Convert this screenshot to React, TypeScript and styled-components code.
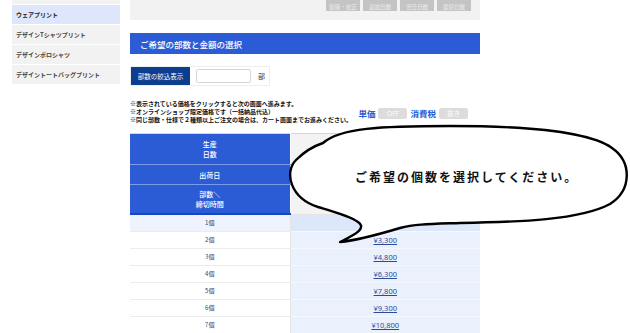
import React from 'react';
import styled, { createGlobalStyle } from 'styled-components';

const GlobalStyle = createGlobalStyle`
  html, body {
    margin: 0;
    padding: 0;
    background: #fff;
    overflow: hidden;
  }
  body {
    font-family: 'Noto Sans CJK JP', 'Noto Sans', sans-serif;
    color: #333;
  }
`;

const Page = styled.div`
  position: relative;
  width: 630px;
  height: 333px;
  overflow: hidden;
  display: grid;
  grid-template-columns: 108px 350px;
  column-gap: 10px;
  padding-left: 12px;
  box-sizing: border-box;
`;

const SideMenu = styled.ul`
  list-style: none;
  margin: 0;
  padding: 0;
  display: flex;
  flex-direction: column;
  gap: 1px;
`;

const SideItem = styled.li<{ $active?: boolean; $h?: number }>`
  height: ${(p) => p.$h ?? 19}px;
  display: flex;
  align-items: center;
  padding-left: 4px;
  font-size: 6px;
  font-weight: 700;
  color: ${(p) => (p.$active ? '#222' : '#444')};
  background: ${(p) => (p.$active ? '#dde6fb' : '#f2f2f2')};
`;

const Main = styled.div`
  display: flex;
  flex-direction: column;
`;

const TopPanel = styled.div`
  height: 20px;
  background: #f2f2f2;
  display: flex;
  justify-content: flex-end;
  align-items: flex-start;
  gap: 3px;
  padding-right: 9px;
`;

const GrayButton = styled.span`
  width: 34px;
  height: 11px;
  background: #c4c4c4;
  color: #eee;
  font-size: 5.5px;
  display: flex;
  align-items: flex-end;
  justify-content: center;
  padding-bottom: 1px;
  box-sizing: border-box;
  line-height: 1;
`;

const SectionBar = styled.h2`
  margin: 13px 0 0;
  height: 21px;
  background: #2b5cd5;
  color: #fff;
  font-size: 8.5px;
  font-weight: 500;
  display: flex;
  align-items: center;
  padding-left: 10px;
`;

const FilterRow = styled.div`
  margin-top: 12px;
  height: 20px;
  width: 140px;
  display: flex;
  align-items: center;
  border: 1px solid #efefef;
  box-sizing: border-box;
`;

const FilterLabel = styled.span`
  background: #0c3d8f;
  color: #fff;
  font-size: 6.5px;
  height: 100%;
  width: 59px;
  display: flex;
  align-items: center;
  justify-content: center;
`;

const CountInput = styled.input`
  width: 55px;
  height: 14px;
  margin-left: 6px;
  border: 1px solid #d6d6d6;
  border-radius: 2px;
  box-sizing: border-box;
  padding: 0;
`;

const Unit = styled.span`
  font-size: 7px;
  margin-left: 7px;
  color: #333;
`;

const NoticeRow = styled.div`
  margin-top: 14px;
  display: flex;
  justify-content: space-between;
  align-items: flex-start;
  padding-right: 12px;
`;

const Notes = styled.div`
  font-size: 6px;
  font-weight: 700;
  line-height: 8px;
  color: #111;
  white-space: nowrap;
`;

const ToggleGroup = styled.div`
  margin-top: 7px;
  display: flex;
  align-items: center;
  gap: 3px;
`;

const ToggleLabel = styled.span`
  font-size: 8.5px;
  font-weight: 700;
  color: #2b5cd5;
`;

const ToggleChip = styled.span`
  width: 29px;
  height: 11px;
  border-radius: 2px;
  background: #dcdcdc;
  color: #fff;
  font-size: 6.5px;
  font-family: 'Noto Sans', 'Noto Sans CJK JP', sans-serif;
  display: flex;
  align-items: center;
  justify-content: center;
`;

const PriceTable = styled.table`
  margin-top: 9px;
  width: 350px;
  border-collapse: collapse;
  table-layout: fixed;
  border-top: 1px solid #c8d5f3;
  font-size: 6px;
`;

const HeadCell = styled.th<{ $h: number }>`
  height: ${(p) => p.$h}px;
  padding: 0;
  background: #2b5cd5;
  color: #fff;
  font-size: 7px;
  font-weight: 500;
  line-height: 10px;
  border-bottom: 1px solid #7b9be6;
  border-right: 1px solid #fff;
`;

const HeadBlank = styled.th`
  padding: 0;
  background: #f3f3f3;
  border-bottom: 1px solid #e4e4e4;
`;

const LastHead = styled(HeadCell)`
  border-bottom: 2px solid #1447c8;
`;

const CountCell = styled.td<{ $first?: boolean }>`
  height: 16px;
  padding: 0;
  text-align: center;
  font-size: 6px;
  line-height: 16px;
  color: #2a3f7a;
  background: ${(p) => (p.$first ? '#eef3fd' : '#fff')};
  border-bottom: 1px solid #ececec;
  border-right: 1px solid #e4e4e4;
`;

const PriceCell = styled.td<{ $first?: boolean }>`
  height: 16px;
  padding: 0;
  text-align: center;
  font-size: 7.5px;
  line-height: 16px;
  background: ${(p) => (p.$first ? '#dce7fa' : '#eaf1fd')};
  border-bottom: 1px solid #f4f7fe;
  a {
    font-family: 'Noto Sans', 'Noto Sans CJK JP', sans-serif;
    color: #2b4b9b;
    text-decoration: underline;
  }
`;

const Bubble = styled.div`
  position: absolute;
  left: 280px;
  top: 120px;
  width: 350px;
  height: 130px;
  pointer-events: none;
  svg {
    position: absolute;
    inset: 0;
  }
`;

const BubbleText = styled.p`
  position: absolute;
  margin: 0;
  left: 75px;
  top: 48px;
  font-size: 12px;
  font-weight: 700;
  letter-spacing: 2px;
  color: #111;
  white-space: nowrap;
`;

const menu = ['ウェアプリント', 'デザインTシャツプリント', 'デザインポロシャツ', 'デザイントートバッグプリント'];
const topButtons = ['製版・校正', '追加日数', '翌日日数', '最短日数'];
const prices = ['', '¥3,300', '¥4,800', '¥6,300', '¥7,800', '¥9,300', '¥10,800'];

export default function App() {
  return (
    <>
      <GlobalStyle />
      <Page>
        <SideMenu>
          <SideItem $h={4} />
          {menu.map((m, i) => (
            <SideItem key={m} $active={i === 0}>{m}</SideItem>
          ))}
        </SideMenu>
        <Main>
          <TopPanel>
            {topButtons.map((b) => (
              <GrayButton key={b}>{b}</GrayButton>
            ))}
          </TopPanel>
          <SectionBar>ご希望の部数と金額の選択</SectionBar>
          <FilterRow>
            <FilterLabel>部数の絞込表示</FilterLabel>
            <CountInput type="text" />
            <Unit>部</Unit>
          </FilterRow>
          <NoticeRow>
            <Notes>
              ※表示されている価格をクリックすると次の画面へ進みます。<br />
              ※オンラインショップ限定価格です（一括納品代込）<br />
              ※同じ部数・仕様で２種類以上ご注文の場合は、カート画面までお進みください。
            </Notes>
            <ToggleGroup>
              <ToggleLabel>単価</ToggleLabel>
              <ToggleChip>OFF</ToggleChip>
              <ToggleLabel>消費税</ToggleLabel>
              <ToggleChip>抜き</ToggleChip>
            </ToggleGroup>
          </NoticeRow>
          <PriceTable>
            <colgroup>
              <col style={{ width: 160 }} />
              <col style={{ width: 190 }} />
            </colgroup>
            <thead>
              <tr>
                <HeadCell $h={30}>生産<br />日数</HeadCell>
                <HeadBlank />
              </tr>
              <tr>
                <HeadCell $h={19}>出荷日</HeadCell>
                <HeadBlank />
              </tr>
              <tr>
                <LastHead $h={28}>部数＼<br />締切時間</LastHead>
                <HeadBlank />
              </tr>
            </thead>
            <tbody>
              {prices.map((p, i) => (
                <tr key={i}>
                  <CountCell $first={i === 0}>{i + 1}個</CountCell>
                  <PriceCell $first={i === 0}>{p && <a href="#">{p}</a>}</PriceCell>
                </tr>
              ))}
            </tbody>
          </PriceTable>
        </Main>
        <Bubble>
          <svg width="350" height="130" viewBox="0 0 350 130">
            <path
              d="M 43 23 C 60 8, 100 6, 170 6 C 250 6, 310 12, 332 28 C 352 42, 352 70, 330 84 C 300 100, 240 102, 180 103 C 150 104, 135 104, 120 108 C 100 114, 80 120, 60 122 C 72 116, 88 109, 78 102 C 70 96, 55 92, 38 87 C 10 78, 4 52, 16 40 C 25 31, 34 26, 43 23 Z"
              fill="#fff"
              stroke="#000"
              strokeWidth="2.4"
              strokeLinejoin="round"
            />
          </svg>
          <BubbleText>ご希望の個数を選択してください。</BubbleText>
        </Bubble>
      </Page>
    </>
  );
}
